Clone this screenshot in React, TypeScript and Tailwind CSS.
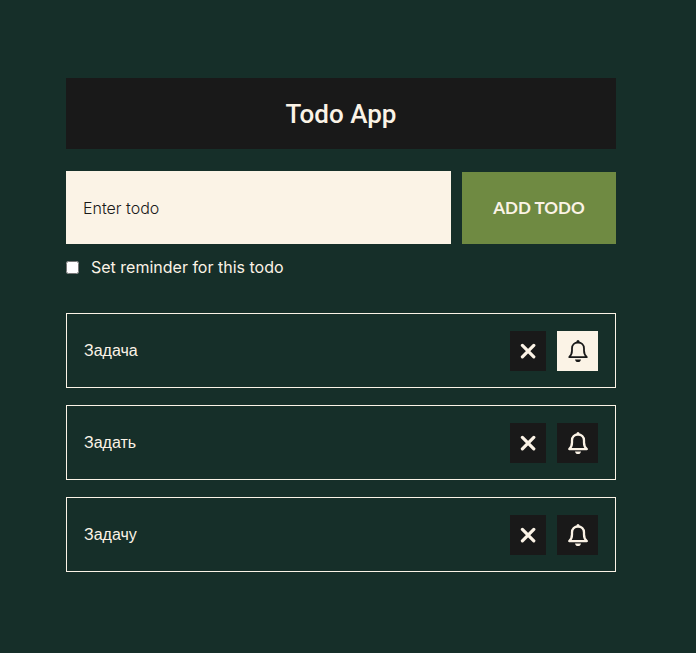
import { useState } from "react";
import type { FormEvent } from "react";

type Todo = { id: number; title: string; reminder: boolean };

const initialTodos: Todo[] = [
  { id: 1, title: "Задача", reminder: true },
  { id: 2, title: "Задать", reminder: false },
  { id: 3, title: "Задачу", reminder: false },
];

function CloseIcon() {
  return (
    <svg viewBox="0 0 16 16" className="size-4" fill="none" stroke="currentColor" strokeWidth="3.2" strokeLinecap="round" aria-hidden="true">
      <path d="M2.4 2.4 13.8 13.8M13.8 2.4 2.4 13.8" />
    </svg>
  );
}

function BellIcon({ active }: { active: boolean }) {
  return (
    <svg viewBox="0 0 20 22" className="h-[22px] w-5" aria-hidden="true">
      <circle cx="10" cy="1.6" r="1.5" fill="currentColor" />
      <path
        d="M1.2 17.1C3.4 15.2 4 13.3 4 10.5V8.4C4 4.8 6.5 2.5 10 2.5s6 2.3 6 5.9v2.1c0 2.8.6 4.7 2.8 6.6Z"
        fill="none"
        stroke="currentColor"
        strokeWidth={active ? 1.8 : 2.3}
        strokeLinejoin="round"
      />
      <path d="M7 19.4h6c-.3 1.6-1.4 2.6-3 2.6s-2.7-1-3-2.6Z" fill="currentColor" />
    </svg>
  );
}

type TodoItemProps = { todo: Todo; onRemove: () => void; onToggle: () => void };

function TodoItem({ todo, onRemove, onToggle }: TodoItemProps) {
  return (
    <li className="flex items-center justify-between border border-[#fbf3e6] px-[17px] pt-[17px] pb-4">
      <span className="font-['Liberation_Sans',Arial,sans-serif] text-[16px] leading-6">{todo.title}</span>
      <div className="flex gap-[11px]">
        <button type="button" aria-label="Delete todo" onClick={onRemove} className="flex h-10 w-9 items-center justify-center bg-[#191919]">
          <CloseIcon />
        </button>
        <button
          type="button"
          aria-label="Toggle reminder"
          aria-pressed={todo.reminder}
          onClick={onToggle}
          className={`flex h-10 w-[41px] items-center justify-center ${todo.reminder ? "bg-[#fbf3e6] text-[#191919]" : "bg-[#191919]"}`}
        >
          <BellIcon active={todo.reminder} />
        </button>
      </div>
    </li>
  );
}

export default function App() {
  const [todos, setTodos] = useState(initialTodos);
  const [title, setTitle] = useState("");
  const [reminder, setReminder] = useState(false);

  const addTodo = (event: FormEvent) => {
    event.preventDefault();
    if (!title.trim()) return;
    setTodos([...todos, { id: Date.now(), title: title.trim(), reminder }]);
    setTitle("");
    setReminder(false);
  };

  return (
    <main className="min-h-screen bg-[#162f29] pt-[78px] pr-20 pb-20 pl-[66px] font-['Inter',sans-serif] text-[#fbf3e6]">
      <h1 className="bg-[#191919] pt-[18px] pb-4 text-center font-['Roboto',sans-serif] text-[26px] leading-[37px] font-medium">Todo App</h1>
      <form onSubmit={addTodo} className="mt-[22px]">
        <div className="flex items-end gap-[11px]">
          <input
            type="text"
            aria-label="Enter todo"
            placeholder="Enter todo"
            value={title}
            onChange={(event) => setTitle(event.target.value)}
            className="h-[73px] min-w-0 flex-1 bg-[#fbf3e6] px-[17px] text-[16px] font-light text-[#191919] placeholder:text-[#191919] placeholder:opacity-100"
          />
          <button type="submit" className="h-[72px] w-[154px] bg-[#6f8a42] font-['Lato',sans-serif] text-[17px] font-bold uppercase">
            Add todo
          </button>
        </div>
        <label className="mt-[11px] flex items-center gap-3 text-[16px] leading-6">
          <input type="checkbox" checked={reminder} onChange={(event) => setReminder(event.target.checked)} className="size-[13px]" />
          Set reminder for this todo
        </label>
      </form>
      <ul className="mt-[34px] flex flex-col gap-[17px]">
        {todos.map((todo) => (
          <TodoItem
            key={todo.id}
            todo={todo}
            onRemove={() => setTodos(todos.filter((item) => item.id !== todo.id))}
            onToggle={() => setTodos(todos.map((item) => (item.id === todo.id ? { ...item, reminder: !item.reminder } : item)))}
          />
        ))}
      </ul>
    </main>
  );
}
